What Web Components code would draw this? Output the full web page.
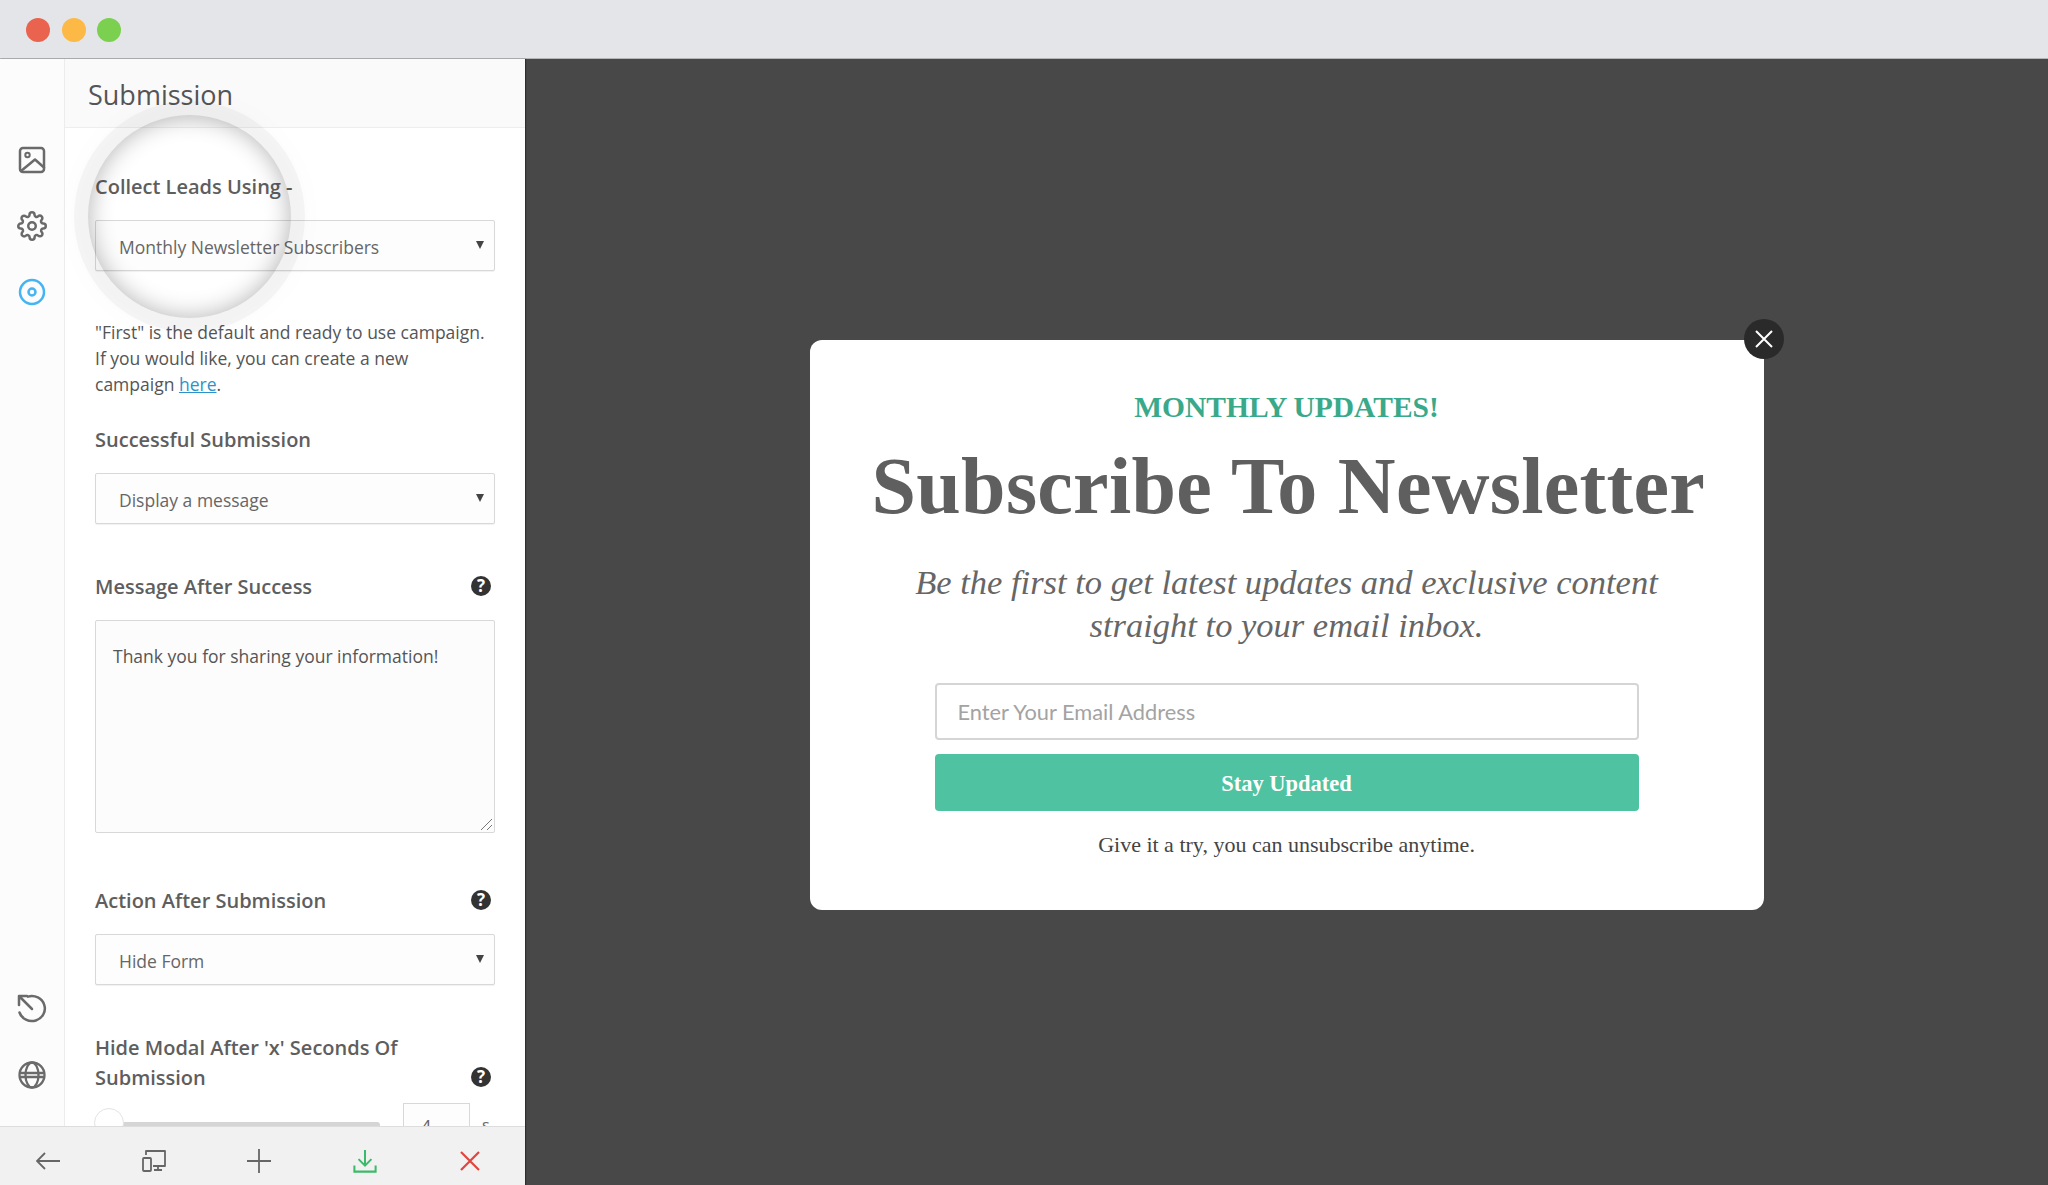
<!DOCTYPE html>
<html>
<head>
<meta charset="utf-8">
<title>Submission</title>
<style>
	html, body { margin: 0; height: 100%; overflow: hidden; }
	body { font-family: "Open Sans", sans-serif; }
</style>
</head>
<body>
<app-window>
	<title-bar slot="top"></title-bar>
	<side-rail slot="rail"></side-rail>
	<settings-panel slot="panel" heading="Submission">
		<form-field label="Collect Leads Using -" style="--top:44px">
			<select-box>Monthly Newsletter Subscribers</select-box>
			<help-note>"First" is the default and ready to use campaign. If you would like, you can create a new campaign <a href="#">here</a>.</help-note>
		</form-field>
		<form-field label="Successful Submission" style="--top:28px">
			<select-box>Display a message</select-box>
		</form-field>
		<form-field label="Message After Success" help style="--top:48px">
			<text-box>Thank you for sharing your information!</text-box>
		</form-field>
		<form-field label="Action After Submission" help style="--top:53px">
			<select-box>Hide Form</select-box>
		</form-field>
		<form-field label="Hide Modal After 'x' Seconds Of Submission" help style="--top:48px">
			<range-row value="4" unit="s"></range-row>
		</form-field>
	</settings-panel>
	<preview-canvas slot="canvas">
		<newsletter-modal></newsletter-modal>
	</preview-canvas>
</app-window>

<script>
(function() {
	function define(name, html, extra) {
		let template = document.createElement("template");
		template.innerHTML = html;
		class Box extends HTMLElement {
			constructor() {
				super();
				this._shadowRoot = this.attachShadow({mode: "open"});
				this._shadowRoot.appendChild(template.content.cloneNode(true));
			}
			connectedCallback() {
				if (extra) extra.call(this, this._shadowRoot);
			}
		}
		customElements.define(name, Box);
	}

	define("app-window", `
		<style>
			:host { display: grid; grid-template-columns: 525px 1fr; grid-template-rows: 59px 1fr; width: 2048px; height: 1185px; }
			.top { grid-column: 1 / 3; }
			.left { display: flex; min-height: 0; overflow: hidden; position: relative; box-shadow: 1px 0 1px rgba(0,0,0,.35); }
		</style>
		<div class="top"><slot name="top"></slot></div>
		<div class="left"><slot name="rail"></slot><slot name="panel"></slot></div>
		<slot name="canvas"></slot>
	`);

	define("title-bar", `
		<style>
			:host { display: flex; align-items: center; gap: 11.500px; height: 58px; padding-left: 26px; background: #e3e5e9; border-bottom: 1px solid #b4b5b8; }
			i { width: 24px; height: 24px; border-radius: 50%; margin-top: 1px; }
		</style>
		<i style="background:#e9634f"></i><i style="background:#fdb945"></i><i style="background:#7bd04f"></i>
	`);

	define("side-rail", `
		<style>
			:host { display: flex; flex-direction: column; justify-content: space-between; flex: none; width: 65px; box-sizing: border-box; height: 1126px; padding: 86px 1px 95px 0; background: #fcfcfc; border-right: 1px solid #ececec; }
			div { display: flex; flex-direction: column; align-items: center; gap: 36px; }
			div + div { gap: 37px; }
			svg { width: 30px; height: 30px; fill: none; stroke: #6a6a6a; stroke-linecap: round; stroke-linejoin: round; }
		</style>
		<div>
			<svg viewBox="0 0 30 30"><rect x="3" y="3" width="24" height="24" rx="3" stroke-width="2.500"/><circle cx="10.500" cy="10" r="2.200" stroke-width="2"/><path d="M4 26L18 14.500 27 22.500" stroke-width="2.500"/></svg>
			<svg viewBox="0 0 24 24" stroke-width="2"><circle cx="12" cy="12" r="3"/><path d="M19.400 15a1.650 1.650 0 0 0 .33 1.820l.06.06a2 2 0 0 1 0 2.830 2 2 0 0 1-2.830 0l-.06-.06a1.650 1.650 0 0 0-1.820-.33 1.650 1.650 0 0 0-1 1.510V21a2 2 0 0 1-2 2 2 2 0 0 1-2-2v-.09A1.650 1.650 0 0 0 9 19.400a1.650 1.650 0 0 0-1.820.33l-.06.06a2 2 0 0 1-2.830 0 2 2 0 0 1 0-2.830l.06-.06a1.650 1.650 0 0 0 .33-1.820 1.650 1.650 0 0 0-1.510-1H3a2 2 0 0 1-2-2 2 2 0 0 1 2-2h.09A1.650 1.650 0 0 0 4.600 9a1.650 1.650 0 0 0-.33-1.820l-.06-.06a2 2 0 0 1 0-2.830 2 2 0 0 1 2.830 0l.06.06a1.650 1.650 0 0 0 1.820.33H9a1.650 1.650 0 0 0 1-1.510V3a2 2 0 0 1 2-2 2 2 0 0 1 2 2v.09a1.650 1.650 0 0 0 1 1.510 1.650 1.650 0 0 0 1.820-.33l.06-.06a2 2 0 0 1 2.830 0 2 2 0 0 1 0 2.830l-.06.06a1.650 1.650 0 0 0-.33 1.820V9a1.650 1.650 0 0 0 1.510 1H21a2 2 0 0 1 2 2 2 2 0 0 1-2 2h-.09a1.650 1.650 0 0 0-1.510 1z"/></svg>
			<svg viewBox="0 0 30 30" style="stroke:#45b4f2"><circle cx="15" cy="15" r="12" stroke-width="2.500"/><circle cx="15" cy="15" r="3.500" stroke-width="2.500"/></svg>
		</div>
		<div>
			<svg viewBox="0 0 30 30" stroke-width="2.500"><path d="M11 3.600A13 12.500 0 1 1 2.500 19.500"/><path d="M2 3h8M2 3v9M2 3l13 13"/></svg>
			<svg viewBox="0 0 30 30" stroke-width="2.300"><circle cx="15" cy="15" r="12.500"/><ellipse cx="15" cy="15" rx="6.500" ry="12.500"/><path d="M3 13h24M3 17h24"/></svg>
		</div>
	`);

	define("settings-panel", `
		<style>
			:host { display: flex; flex-direction: column; flex: 1; min-width: 0; height: 1126px; position: relative; background: #fff; color: #555; }
			header { flex: none; height: 69px; box-sizing: border-box; padding: 15px 0 0 23px; background: #fafafa; border-bottom: 1px solid #eee; font-size: 27px; line-height: 42px; color: #555; }
			.body { flex: 1; min-height: 0; overflow: hidden; padding: 0 30px; }
			.spot { position: absolute; left: 23px; top: 56px; width: 203px; height: 203px; border-radius: 50%; box-shadow: inset 0 0 24px rgba(0,0,0,.3), 0 0 0 14px rgba(0,0,0,.035), 0 0 30px 14px rgba(0,0,0,.02); pointer-events: none; }
		</style>
		<header id="title"></header>
		<div class="body"><slot></slot></div>
		<div class="spot"></div>
	`, function(root) {
		root.getElementById("title").textContent = this.getAttribute("heading");
	});

	define("form-field", `
		<style>
			:host { display: block; margin-top: var(--top, 30px); }
			.head { display: flex; align-items: flex-end; justify-content: space-between; gap: 12px; margin-bottom: 18px; }
			.label { font-size: 20px; font-weight: 600; line-height: 30px; color: #5e5e5e; }
			help-icon { flex: none; margin: 0 4px 6px 0; }
		</style>
		<div class="head"><div class="label" id="label"></div><help-icon id="help"></help-icon></div>
		<slot></slot>
	`, function(root) {
		root.getElementById("label").textContent = this.getAttribute("label");
		if (!this.hasAttribute("help")) root.getElementById("help").remove();
	});

	define("help-icon", `
		<style>
			:host { display: block; width: 20px; height: 20px; }
			div { width: 20px; height: 20px; border-radius: 50%; background: #333; color: #fff; font: 700 17px/20px "Open Sans", sans-serif; text-align: center; }
		</style>
		<div>?</div>
	`);

	define("select-box", `
		<style>
			:host { display: flex; align-items: center; justify-content: space-between; height: 51px; box-sizing: border-box; padding: 2px 10px 0 23px; border: 1px solid #d8d8d8; border-radius: 2px; background: #fdfdfd; box-shadow: 0 1px 1px rgba(0,0,0,.06); font-size: 17.500px; color: #666; }
			i { width: 0; height: 0; margin-top: -3px; border: 4.500px solid transparent; border-top: 8px solid #444; border-bottom: 0; }
		</style>
		<span><slot></slot></span><i></i>
	`);

	define("help-note", `
		<style>
			:host { display: block; margin-top: 48px; padding-right: 5px; font-size: 17.500px; line-height: 26px; color: #555; }
			::slotted(a) { color: #2b93c9; }
		</style>
		<slot></slot>
	`);

	define("text-box", `
		<style>
			:host { display: block; position: relative; height: 213px; box-sizing: border-box; padding: 22px 17px; border: 1px solid #d8d8d8; border-radius: 2px; background: #fcfcfc; font-size: 17.500px; line-height: 26px; color: #555; }
			svg { position: absolute; right: 1px; bottom: 1px; width: 14px; height: 14px; stroke: #777; fill: none; }
		</style>
		<slot></slot>
		<svg viewBox="0 0 14 14"><path d="M2 13L13 2M8 13l5-5"/></svg>
	`);

	define("range-row", `
		<style>
			:host { display: flex; align-items: flex-start; height: 60px; margin-top: -8px; }
			.track { position: relative; width: 271px; height: 6px; margin-top: 19px; background: #d5d5d5; border-radius: 3px; flex: none; }
			.knob { position: absolute; left: -15px; top: -14px; width: 28px; height: 28px; border-radius: 50%; background: #fff; border: 1px solid #e3e3e3; }
			.num { width: 67px; height: 50px; margin-left: 23px; box-sizing: border-box; border: 1px solid #d8d8d8; padding: 10px 0 0 17px; font-size: 18px; color: #666; background: #fdfdfd; }
			.unit { margin-left: 12px; padding-top: 11px; font-size: 16px; color: #666; }
		</style>
		<div style="width:14px;flex:none"></div>
		<div class="track"><div class="knob"></div></div>
		<div class="num" id="num"></div><div class="unit" id="unit"></div>
	`, function(root) {
		root.getElementById("num").textContent = this.getAttribute("value");
		root.getElementById("unit").textContent = this.getAttribute("unit");
	});

	define("preview-canvas", `
		<style>
			:host { display: flex; align-items: center; justify-content: center; padding-top: 6px; background: #484848; min-height: 0; }
		</style>
		<slot></slot>
	`);

	define("newsletter-modal", `
		<style>
			:host { display: block; position: relative; width: 954px; height: 570px; box-sizing: border-box; padding: 49px 125px 0; border-radius: 12px; background: #fff; font-family: "Liberation Serif", serif; text-align: center; color: #5f5f5f; }
			.close { position: absolute; right: -20px; top: -21px; width: 40px; height: 40px; border-radius: 50%; background: #2a2a2a; display: flex; align-items: center; justify-content: center; }
			.close svg { width: 20px; height: 20px; stroke: #fff; stroke-width: 2; fill: none; }
			.kicker { font-size: 29.500px; font-weight: 700; line-height: 36px; color: #3aa98a; }
			h1 { margin: 16px -57px 0 -63px; font-size: 80px; font-weight: 700; line-height: 90px; letter-spacing: .3px; color: #5f5f5f; white-space: nowrap; }
			.sub { margin: 30px -30px 0; font-size: 34.500px; font-style: italic; line-height: 43px; color: #666; }
			.email { margin-top: 36px; height: 57px; box-sizing: border-box; padding: 0 21px; display: flex; align-items: center; border: 2px solid #d5d5d5; border-radius: 4px; font: 21.800px "Lato", sans-serif; color: #a3a3a3; }
			.go { margin-top: 14px; height: 57px; box-sizing: border-box; padding-top: 2px; display: flex; align-items: center; justify-content: center; border-radius: 4px; background: #4fc3a1; color: #fff; font-size: 22.500px; font-weight: 700; }
			.small { margin-top: 21px; font-size: 22px; line-height: 26px; color: #444; }
		</style>
		<div class="close"><svg viewBox="0 0 20 20"><path d="M2 2l16 16M18 2L2 18"/></svg></div>
		<div class="kicker">MONTHLY UPDATES!</div>
		<h1>Subscribe To Newsletter</h1>
		<p class="sub">Be the first to get latest updates and exclusive content straight to your email inbox.</p>
		<div class="email">Enter Your Email Address</div>
		<div class="go">Stay Updated</div>
		<div class="small">Give it a try, you can unsubscribe anytime.</div>
	`);

	define("action-bar", `
		<style>
			:host { display: flex; align-items: center; justify-content: space-between; position: fixed; left: 0; bottom: 0; width: 525px; height: 59px; box-sizing: border-box; padding: 9px 43px 0 36px; background: #f1f1f1; border-top: 1px solid #ddd; z-index: 5; }
			svg { width: 24px; height: 24px; fill: none; stroke: #666; stroke-width: 1.800; }
		</style>
		<svg viewBox="0 0 24 24"><path d="M24 12H1M9 4l-8 8 8 8"/></svg>
		<svg viewBox="0 0 24 24" stroke-linejoin="round"><path d="M4 6V2h19v15H11M12 21h8M16 17v4"/><rect x="1" y="9" width="8" height="13" rx="1"/></svg>
		<svg viewBox="0 0 24 24"><path d="M0 12h24M12 0v24"/></svg>
		<svg viewBox="0 0 26 26" style="stroke:#3cb96a;stroke-width:2.200"><path d="M13 1v17M6 11l7 7 7-7M1.500 18v6.500h23V18"/></svg>
		<svg viewBox="0 0 24 24" style="stroke:#e0443e;stroke-width:2.200"><path d="M3 3l18 18M21 3L3 21"/></svg>
	`);

	document.body.appendChild(document.createElement("action-bar"));
})();
</script>
</body>
</html>
